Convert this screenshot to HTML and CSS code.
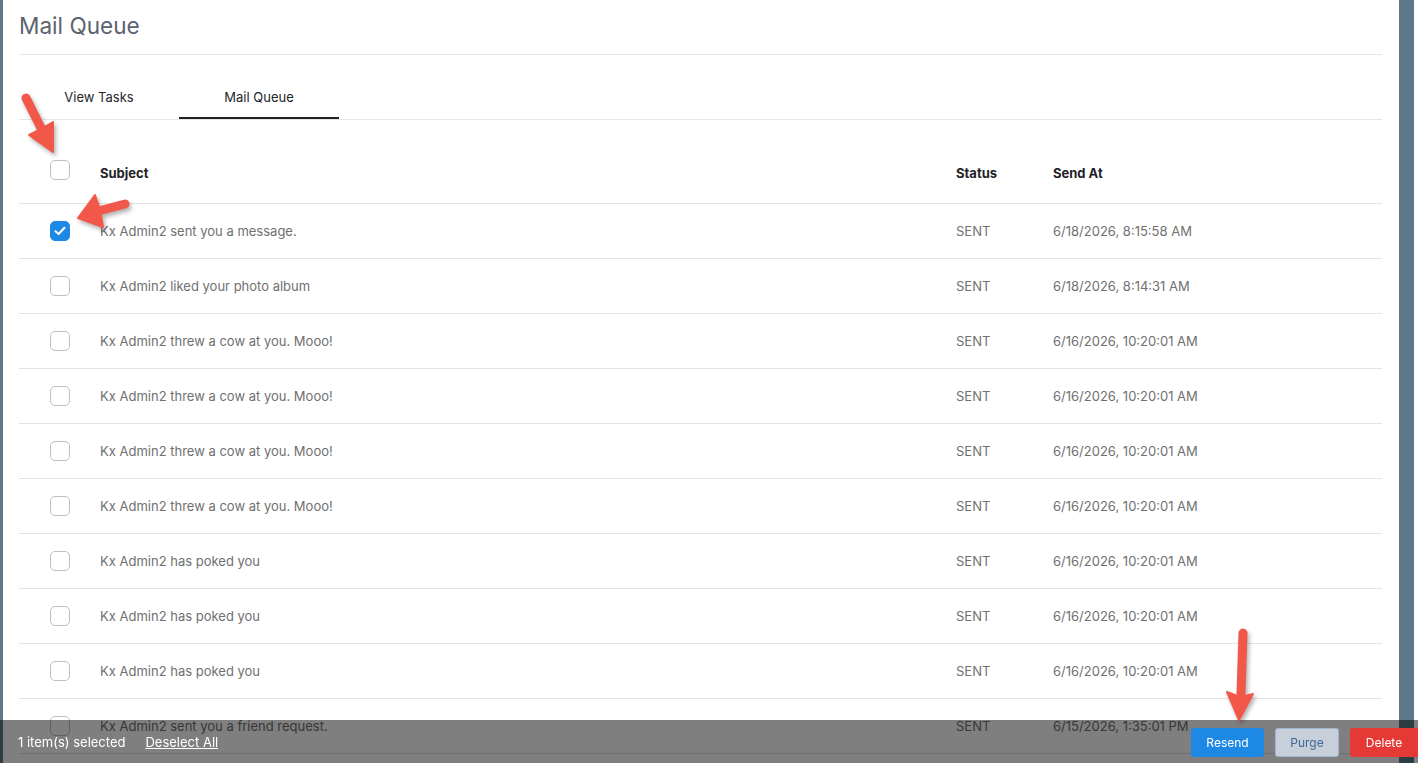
FILE: index.html
```html
<!DOCTYPE html>
<html lang="en">
<head>
    <meta charset="UTF-8">
    <meta name="viewport" content="width=device-width, initial-scale=1.0">
    <title>Mail Queue</title>
    <link rel="stylesheet" href="styles.css">
</head>
<body>
    <div class="page">
        <h1 class="title">Mail Queue</h1>

        <div class="tabs">
            <div class="tab">View Tasks</div>
            <div class="tab active">Mail Queue</div>
        </div>

        <div class="table">
            <div class="row head">
                <div class="cell check"><span class="box"></span></div>
                <div class="cell">Subject</div>
                <div class="cell">Status</div>
                <div class="cell">Send At</div>
            </div>
            <div class="row">
                <div class="cell check">
                    <span class="box checked">
                        <svg width="12" height="10" viewBox="0 0 12 10"><path d="M1.5 5.2 L4.6 8 L10.5 1.8" fill="none" stroke="#fff" stroke-width="2" stroke-linecap="round" stroke-linejoin="round"/></svg>
                    </span>
                </div>
                <div class="cell">Kx Admin2 sent you a message.</div>
                <div class="cell">SENT</div>
                <div class="cell">6/18/2026, 8:15:58 AM</div>
            </div>
            <div class="row">
                <div class="cell check"><span class="box"></span></div>
                <div class="cell">Kx Admin2 liked your photo album</div>
                <div class="cell">SENT</div>
                <div class="cell">6/18/2026, 8:14:31 AM</div>
            </div>
            <div class="row">
                <div class="cell check"><span class="box"></span></div>
                <div class="cell">Kx Admin2 threw a cow at you. Mooo!</div>
                <div class="cell">SENT</div>
                <div class="cell">6/16/2026, 10:20:01 AM</div>
            </div>
            <div class="row">
                <div class="cell check"><span class="box"></span></div>
                <div class="cell">Kx Admin2 threw a cow at you. Mooo!</div>
                <div class="cell">SENT</div>
                <div class="cell">6/16/2026, 10:20:01 AM</div>
            </div>
            <div class="row">
                <div class="cell check"><span class="box"></span></div>
                <div class="cell">Kx Admin2 threw a cow at you. Mooo!</div>
                <div class="cell">SENT</div>
                <div class="cell">6/16/2026, 10:20:01 AM</div>
            </div>
            <div class="row">
                <div class="cell check"><span class="box"></span></div>
                <div class="cell">Kx Admin2 threw a cow at you. Mooo!</div>
                <div class="cell">SENT</div>
                <div class="cell">6/16/2026, 10:20:01 AM</div>
            </div>
            <div class="row">
                <div class="cell check"><span class="box"></span></div>
                <div class="cell">Kx Admin2 has poked you</div>
                <div class="cell">SENT</div>
                <div class="cell">6/16/2026, 10:20:01 AM</div>
            </div>
            <div class="row">
                <div class="cell check"><span class="box"></span></div>
                <div class="cell">Kx Admin2 has poked you</div>
                <div class="cell">SENT</div>
                <div class="cell">6/16/2026, 10:20:01 AM</div>
            </div>
            <div class="row">
                <div class="cell check"><span class="box"></span></div>
                <div class="cell">Kx Admin2 has poked you</div>
                <div class="cell">SENT</div>
                <div class="cell">6/16/2026, 10:20:01 AM</div>
            </div>
            <div class="row">
                <div class="cell check"><span class="box"></span></div>
                <div class="cell">Kx Admin2 sent you a friend request.</div>
                <div class="cell">SENT</div>
                <div class="cell">6/15/2026, 1:35:01 PM</div>
            </div>
        </div>
    </div>

    <!-- selection bar -->
    <div class="selbar">
        <span class="count">1 item(s) selected</span>
        <a class="deselect" href="#">Deselect All</a>
        <div class="actions">
            <button class="btn resend">Resend</button>
            <button class="btn purge">Purge</button>
            <button class="btn delete">Delete</button>
        </div>
    </div>

    <!-- annotation arrows -->
    <svg class="arrows" width="1418" height="763" viewBox="0 0 1418 763">
        <g fill="#f25849" stroke="#f25849" stroke-linecap="round" stroke-linejoin="round">
            <line x1="26" y1="98" x2="42" y2="130" stroke-width="9"/>
            <polygon points="53,152 29,135 41,129 53,122" stroke-width="2"/>

            <line x1="125" y1="204" x2="98" y2="211" stroke-width="9"/>
            <polygon points="78,218 95,195 100,210 103,227" stroke-width="2"/>

            <line x1="1243" y1="633" x2="1241" y2="694" stroke-width="9"/>
            <polygon points="1239,720 1227,692 1240,697 1253,694" stroke-width="2"/>
        </g>
    </svg>
</body>
</html>
```

FILE: styles.css
```css
html, body {
    margin: 0;
    padding: 0;
    overflow: hidden;
}

body {
    font-family: Inter, "Liberation Sans", sans-serif;
    background: #fff;
    width: 1418px;
    height: 763px;
}

.page {
    min-height: 763px;
    box-sizing: content-box;
    border-left: 3px solid #5d7888;
    border-right: 15px solid #5d7888;
    padding: 0 17px 0 16px;
    width: 1363px;
    background: #fff;
}

.title {
    margin: 0;
    padding: 10px 0 12px;
    font-size: 22.6px;
    line-height: 32px;
    font-weight: 400;
    color: #5c6270;
    border-bottom: 1px solid #e6e6e6;
}

.tabs {
    display: flex;
    margin-top: 20px;
    border-bottom: 1px solid #e6e6e6;
}

.tab {
    width: 160px;
    height: 44px;
    box-sizing: border-box;
    display: flex;
    align-items: center;
    justify-content: center;
    font-size: 13px;
    color: #22262c;
}

.tab.active {
    border-bottom: 2px solid #222;
    padding-top: 2px;
}

.row {
    display: grid;
    grid-template-columns: 81px 1fr 97px 329px;
    height: 55px;
    align-items: center;
    border-bottom: 1px solid #e3e3e3;
    box-sizing: border-box;
    font-size: 13px;
    color: #707070;
}

.row.head {
    height: 84px;
    align-items: end;
    padding-bottom: 22px;
    font-weight: 700;
    color: #1f2328;
}

.cell.check {
    padding-left: 31px;
    display: flex;
}

.row.head .cell.check {
    position: relative;
    top: -1px;
}

.box {
    width: 20px;
    height: 20px;
    box-sizing: border-box;
    border: 1.5px solid #b9c0c8;
    border-radius: 5px;
    display: flex;
    align-items: center;
    justify-content: center;
    background: #fff;
}

.box.checked {
    background: #1e88e5;
    border-color: #1e88e5;
}

.selbar {
    position: fixed;
    left: 0;
    right: 0;
    bottom: 0;
    height: 43px;
    background: rgba(0, 0, 0, 0.5);
    display: flex;
    align-items: center;
    padding-left: 18px;
    font-size: 13px;
    color: #fff;
}

.deselect {
    color: #fff;
    margin-left: 20px;
    text-decoration: underline;
}

.actions {
    margin-left: auto;
    display: flex;
    gap: 11px;
    padding-top: 1px;
}

.btn {
    height: 29px;
    border: none;
    border-radius: 3px;
    font-family: inherit;
    font-size: 12px;
    color: #fff;
    cursor: pointer;
}

.resend {
    width: 73px;
    background: #1e88e5;
}

.purge {
    width: 64px;
    background: #c7d0da;
    border: 1px solid #9fb6d0;
    color: #3f6897;
}

.delete {
    width: 68px;
    background: #e53935;
    border-radius: 3px 0 0 3px;
}

.arrows {
    position: absolute;
    left: 0;
    top: 0;
    pointer-events: none;
    filter: drop-shadow(2px 3px 2px rgba(0, 0, 0, 0.3));
}
```
